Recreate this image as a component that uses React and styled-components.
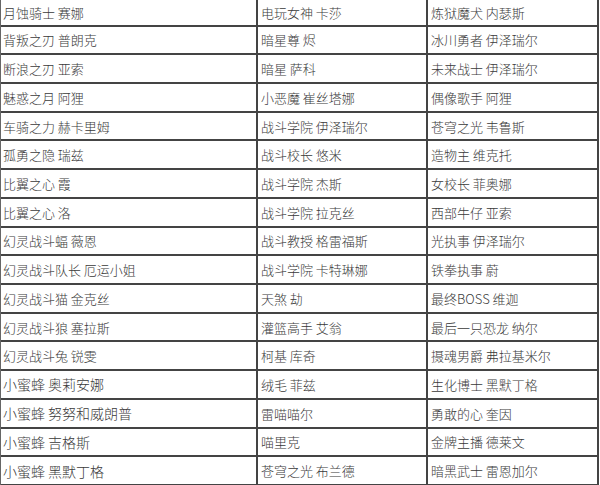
import styled, { createGlobalStyle } from "styled-components";

const GlobalStyle = createGlobalStyle`
	html, body {
		margin: 0;
		padding: 0;
		background: #fff;
	}
	body {
		font-family: "Noto Sans CJK SC", "Liberation Sans", sans-serif;
		color: #333;
	}
`

const Table = styled.div`
	width: 598px;
	display: grid;
	grid-template-columns: 257px 170px 171px;
	border-left: 1px solid #666;
	box-sizing: border-box;
`

const Cell = styled.div`
	box-sizing: border-box;
	height: ${p => (p.$first ? "26.5px" : "28.73px")};
	display: flex;
	align-items: center;
	padding-left: ${p => (p.$col === 0 ? "2px" : "3px")};
	border-bottom: 2px solid #444;
	border-right: 2px solid #444;
	font-size: ${p => (p.$big ? "14px" : "13px")};
	font-weight: 300;
	line-height: 1;
	white-space: nowrap;
	overflow: hidden;
	color: #3a3a3a;
`

const rows = [
	["月蚀骑士 赛娜", "电玩女神 卡莎", "炼狱魔犬 内瑟斯"],
	["背叛之刃 普朗克", "暗星尊 烬", "冰川勇者 伊泽瑞尔"],
	["断浪之刃 亚索", "暗星 萨科", "未来战士 伊泽瑞尔"],
	["魅惑之月 阿狸", "小恶魔 崔丝塔娜", "偶像歌手 阿狸"],
	["车骑之力 赫卡里姆", "战斗学院 伊泽瑞尔", "苍穹之光 韦鲁斯"],
	["孤勇之隐 瑞兹", "战斗校长 悠米", "造物主 维克托"],
	["比翼之心 霞", "战斗学院 杰斯", "女校长 菲奥娜"],
	["比翼之心 洛", "战斗学院 拉克丝", "西部牛仔 亚索"],
	["幻灵战斗蝠 薇恩", "战斗教授 格雷福斯", "光执事 伊泽瑞尔"],
	["幻灵战斗队长 厄运小姐", "战斗学院 卡特琳娜", "铁拳执事 蔚"],
	["幻灵战斗猫 金克丝", "天煞 劫", "最终BOSS 维迦"],
	["幻灵战斗狼 塞拉斯", "灌篮高手 艾翁", "最后一只恐龙 纳尔"],
	["幻灵战斗兔 锐雯", "柯基 库奇", "摄魂男爵 弗拉基米尔"],
	["小蜜蜂 奥莉安娜", "绒毛 菲兹", "生化博士 黑默丁格"],
	["小蜜蜂 努努和威朗普", "雷喵喵尔", "勇敢的心 奎因"],
	["小蜜蜂 吉格斯", "喵里克", "金牌主播 德莱文"],
	["小蜜蜂 黑默丁格", "苍穹之光 布兰德", "暗黑武士 雷恩加尔"],
]

export default function App() {
	return (
		<>
			<GlobalStyle />
			<Table>
				{rows.map((row, i) =>
					row.map((text, j) => (
						<Cell
							key={i + "-" + j}
							$first={i === 0}
							$col={j}
							$big={j === 0 && text.startsWith("小蜜蜂")}
						>
							{text}
						</Cell>
					))
				)}
			</Table>
		</>
	)
}
